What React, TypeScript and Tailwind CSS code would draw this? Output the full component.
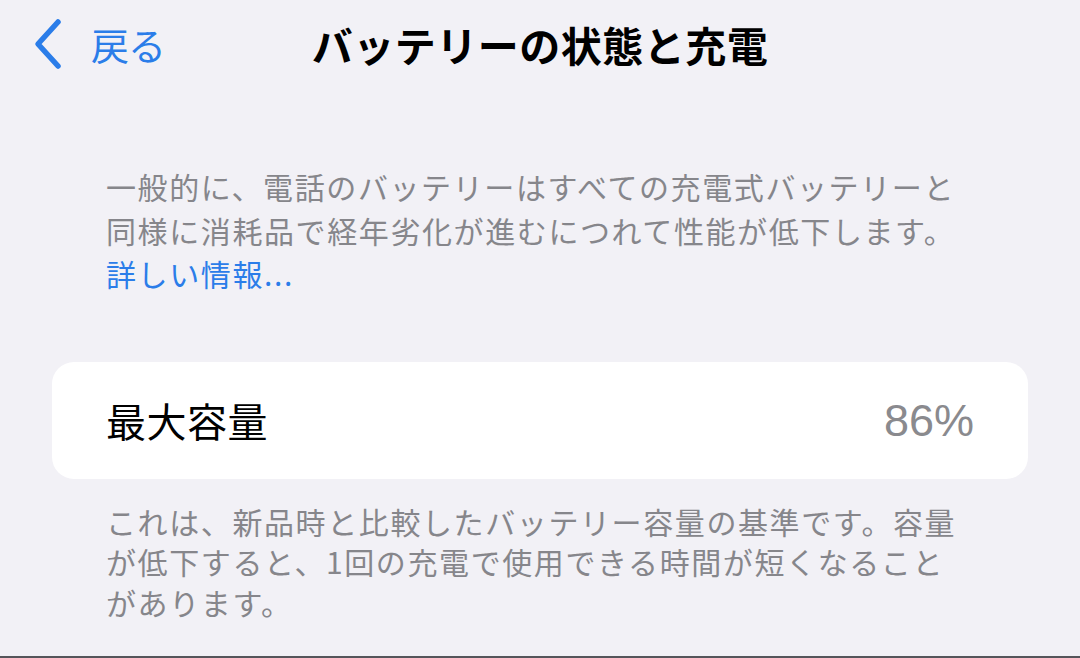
import React from 'react';

const jp = '"Noto Sans CJK JP", "Noto Sans", sans-serif';

function BackChevron() {
  return (
    <svg width="34" height="52" viewBox="0 0 34 52" fill="none" className="shrink-0">
      <path d="M27 4 L7 26 L27 48" stroke="#2b7de9" strokeWidth="5.5" strokeLinecap="round" strokeLinejoin="round" />
    </svg>
  );
}

export default function App() {
  return (
    <main
      className="w-[1080px] h-[658px] bg-[#f2f1f6] overflow-hidden flex flex-col border-b-2 border-[#55555a]"
      style={{ fontFamily: jp }}
    >
      <header className="relative h-[90px] flex items-center px-[31px]">
        <div className="flex items-center gap-[26px] pb-[2px]">
          <BackChevron />
          <span className="text-[38px] leading-none text-[#2b7de9] tracking-[-1px]">戻る</span>
        </div>
        <h1 className="absolute left-0 right-0 top-[21px] text-center text-[41px] leading-[46px] font-bold text-black tracking-[0.5px]">
          バッテリーの状態と充電
        </h1>
      </header>

      <section className="pt-[75px] px-[106px]">
        <p className="text-[30px] leading-[43.5px] tracking-[1.6px] text-[#86868b] whitespace-nowrap">
          一般的に、電話のバッテリーはすべての充電式バッテリーと
          <br />
          同様に消耗品で経年劣化が進むにつれて性能が低下します。
          <br />
          <span className="text-[#2b7de9]">詳しい情報...</span>
        </p>
      </section>

      <section className="mt-[66px] mx-[52px] h-[117px] bg-white rounded-[22px] flex items-center justify-between pl-[54px] pr-[54px]">
        <span className="text-[40px] leading-none text-black tracking-[0.5px]">最大容量</span>
        <span
          className="text-[45px] leading-none text-[#8a8a8e]"
          style={{ fontFamily: '"Liberation Sans", Arial, sans-serif' }}
        >
          86%
        </span>
      </section>

      <section className="pt-[22px] px-[106px]">
        <p className="text-[30px] leading-[40.5px] tracking-[1.6px] text-[#86868b] whitespace-nowrap">
          これは、新品時と比較したバッテリー容量の基準です。容量
          <br />
          が低下すると、1回の充電で使用できる時間が短くなること
          <br />
          があります。
        </p>
      </section>
    </main>
  );
}
